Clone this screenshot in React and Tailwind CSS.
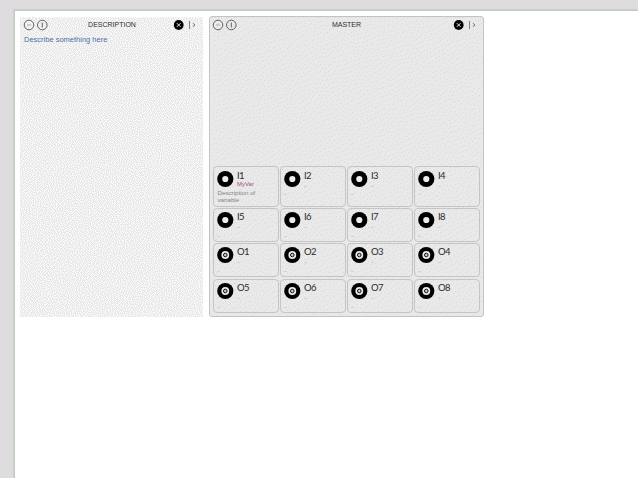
const rows = [
  ["I1", "I2", "I3", "I4"],
  ["I5", "I6", "I7", "I8"],
  ["O1", "O2", "O3", "O4"],
  ["O5", "O6", "O7", "O8"],
];

/* Error-diffused grain: spreads dots of the given density irregularly over a tile. */
function grain(width, height, density, jitter) {
  let seed = 7;
  const random = () => {
    seed = (seed * 1103515245 + 12345) % 2147483648;
    return seed / 2147483648;
  };
  let errors = new Array(width + 2).fill(0).map(() => random() * 0.5);
  let d = "";
  for (let y = 0; y < height; y++) {
    const next = new Array(width + 2).fill(0);
    for (let x = 1; x <= width; x++) {
      const value = density + errors[x];
      const on = value > 0.5 + (random() - 0.5) * jitter;
      const err = value - (on ? 1 : 0);
      errors[x + 1] += (err * 7) / 16;
      next[x - 1] += (err * 3) / 16;
      next[x] += (err * 5) / 16;
      next[x + 1] += err / 16;
      if (on) d += `M${x - 1} ${y}h1v1h-1z`;
    }
    errors = next;
  }
  return d;
}

const coarseGrain = grain(183, 300, 0.33, 0.35);
const fineGrain = grain(273, 299, 0.075, 0.1);

function Texture({ d, fill }) {
  return (
    <svg className="absolute inset-0 h-full w-full" shapeRendering="crispEdges">
      <path d={d} fill={fill} />
    </svg>
  );
}

function Knob({ output }) {
  return (
    <svg className="mt-1 h-4 w-4 shrink-0 overflow-visible" viewBox="0 0 16 16">
      <circle cx="8.3" cy="8" r="8.1" fill="#000" />
      <circle cx="8.3" cy="8" r={output ? 3.9 : 3.1} fill="#ececec" />
      {output && <circle cx="8.3" cy="8" r="1.8" fill="#ccc" stroke="#111" strokeWidth="1" />}
    </svg>
  );
}

function Header({ title }) {
  return (
    <div className="flex h-[15px] items-center">
      <svg className="h-3 w-6 shrink-0 overflow-visible" viewBox="0 0 24 12" fill="none" stroke="#555" strokeWidth="0.9">
        <circle cx="5" cy="6" r="4.8" />
        <path d="M3 6h4" stroke="#aaa" />
        <circle cx="18.3" cy="6" r="4.8" />
        <path d="M18.3 3.6v4.8" />
      </svg>
      <span className="flex-1 pl-[2px] text-center text-[7px] leading-[7px] text-[#303030]">{title}</span>
      <svg className="h-3 w-6 shrink-0 overflow-visible" viewBox="0 0 24 12" fill="none">
        <circle cx="4.7" cy="6" r="4.9" fill="#000" />
        <path d="m2.9 4.2 3.6 3.6m0-3.6L2.9 7.8" stroke="#eee" strokeWidth="1" />
        <path d="M15.5 2v8" stroke="#858078" strokeWidth="1" />
        <path d="m19 4.2 1.8 1.8L19 7.8" stroke="#666" strokeWidth="1" />
      </svg>
    </div>
  );
}

function Card({ name, tall }) {
  const first = name === "I1";
  return (
    <div className={`w-[66px] rounded-[4px] border border-[#c2c7c4] pl-[3px] ${tall ? "h-[41px]" : "h-[34px]"}`}>
      <div className={`flex gap-[3px] ${tall ? "h-[22px]" : "-mt-px mb-px h-[23px]"}`}>
        <Knob output={name[0] === "O"} />
        <div>
          <div className="mt-[3px] pl-px font-['Lato','Liberation_Sans',sans-serif] text-[9.5px] leading-[11px] tracking-[-0.7px] text-[#292929]">
            {name}
          </div>
          {first ? (
            <div className="pl-px text-[6px] leading-[7px] text-[#a44e78]">MyVar</div>
          ) : (
            <div className="ml-px mt-[5px] h-px w-[3px] bg-[#d2d2d2]" />
          )}
        </div>
      </div>
      {first ? (
        <div className="w-[54px] pl-[0.5px] text-[6.2px] leading-[7px] text-[#858585]">Description of variable</div>
      ) : (
        <div className="mt-[5px] h-px w-[3px] bg-[#d2d2d2]" />
      )}
    </div>
  );
}

export default function App() {
  return (
    <div className="h-[478px] w-[638px] overflow-hidden bg-[#dedcde] pl-[14px] pt-[10px] font-['Liberation_Sans',sans-serif]">
      <div className="flex h-[468px] w-[624px] items-start border-l border-t border-[#c2c8c2] bg-white pl-[5px] pt-[5px] shadow-[-1px_-1px_1px_#cfd3cf]">
        <section className="relative mt-[1px] h-[300px] w-[183px] bg-[#e9e9e9]">
          <Texture d={coarseGrain} fill="#fdfdfd" />
          <div className="relative pl-[4px] pr-[5px]">
            <Header title="DESCRIPTION" />
            <p className="mt-[3px] text-[7.5px] leading-[10px] text-[#4d70a8]">Describe something here</p>
          </div>
        </section>
        <section className="relative ml-[6px] flex h-[301px] w-[275px] flex-col rounded-[3px] border border-[#bfc5c1] bg-[#e9e9e9]">
          <Texture d={fineGrain} fill="#dadada" />
          <div className="relative pl-[3px] pr-[5px]">
            <Header title="MASTER" />
          </div>
          <div className="relative mb-[3px] ml-[3px] mt-auto flex flex-col">
            {rows.map((row, i) => (
              <div key={i} className={`flex gap-px ${i < 2 ? "pb-px" : i === 2 ? "pb-[2px]" : ""}`}>
                {row.map((name) => (
                  <Card key={name} name={name} tall={i === 0} />
                ))}
              </div>
            ))}
          </div>
        </section>
      </div>
    </div>
  );
}
